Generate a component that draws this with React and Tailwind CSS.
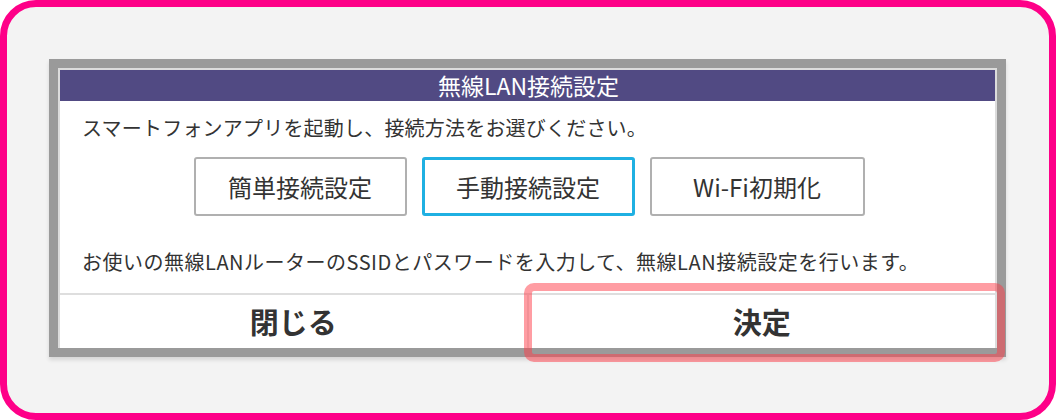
export default function App() {
  const font = { fontFamily: '"Noto Sans CJK JP", "Noto Sans", sans-serif' }
  return (
    <div
      className="h-[420px] w-[1056px] rounded-[36px] border-[7px] border-[#fe0088] bg-[#f3f3f3] pl-[42px] pt-[52px]"
      style={font}
    >
      <div className="relative w-[957px]">
        <div className="border-[9px] border-[#9a9a9a] shadow-[0_3px_4px_rgba(0,0,0,0.12)]">
          <div className="border-2 border-[#dcdcdc] border-b-0">
            <div className="flex h-[31px] items-center justify-center bg-[#514a83] pl-[2px] text-[23px] leading-none text-white">
              無線LAN接続設定
            </div>
            <div className="bg-white">
              <p className="pl-[22px] pt-[12px] text-[20px] leading-[30px] tracking-[0.2px] text-[#333]">
                スマートフォンアプリを起動し、接続方法をお選びください。
              </p>
              <div className="mt-[14px] flex justify-center gap-[15px] pl-[3px]">
                <button className="h-[59px] w-[213px] rounded-[3px] border-2 border-[#b0b0b0] text-[24px] text-[#333]">
                  簡単接続設定
                </button>
                <button className="h-[59px] w-[213px] rounded-[3px] border-[3px] border-[#1fb0e2] text-[24px] text-[#333]">
                  手動接続設定
                </button>
                <button className="h-[59px] w-[215px] rounded-[3px] border-2 border-[#b0b0b0] text-[24px] text-[#333]">
                  Wi-Fi初期化
                </button>
              </div>
              <p className="mt-[31px] pl-[22px] text-[20px] leading-[30px] tracking-[0.5px] text-[#333]">
                お使いの無線LANルーターのSSIDとパスワードを入力して、無線LAN接続設定を行います。
              </p>
              <div className="mt-[16px] flex h-[55px] border-t-2 border-[#dedede]">
                <button className="flex-1 border-r-2 border-[#e4e4e4] text-[29px] font-bold text-[#333]">
                  閉じる
                </button>
                <button className="flex-1 text-[29px] font-bold text-[#333]">決定</button>
              </div>
            </div>
          </div>
        </div>
        <div className="pointer-events-none absolute left-[475px] top-[224px] h-[79px] w-[481px] rounded-[10px] border-[8px] border-[rgba(255,60,72,0.5)]" />
      </div>
    </div>
  )
}
